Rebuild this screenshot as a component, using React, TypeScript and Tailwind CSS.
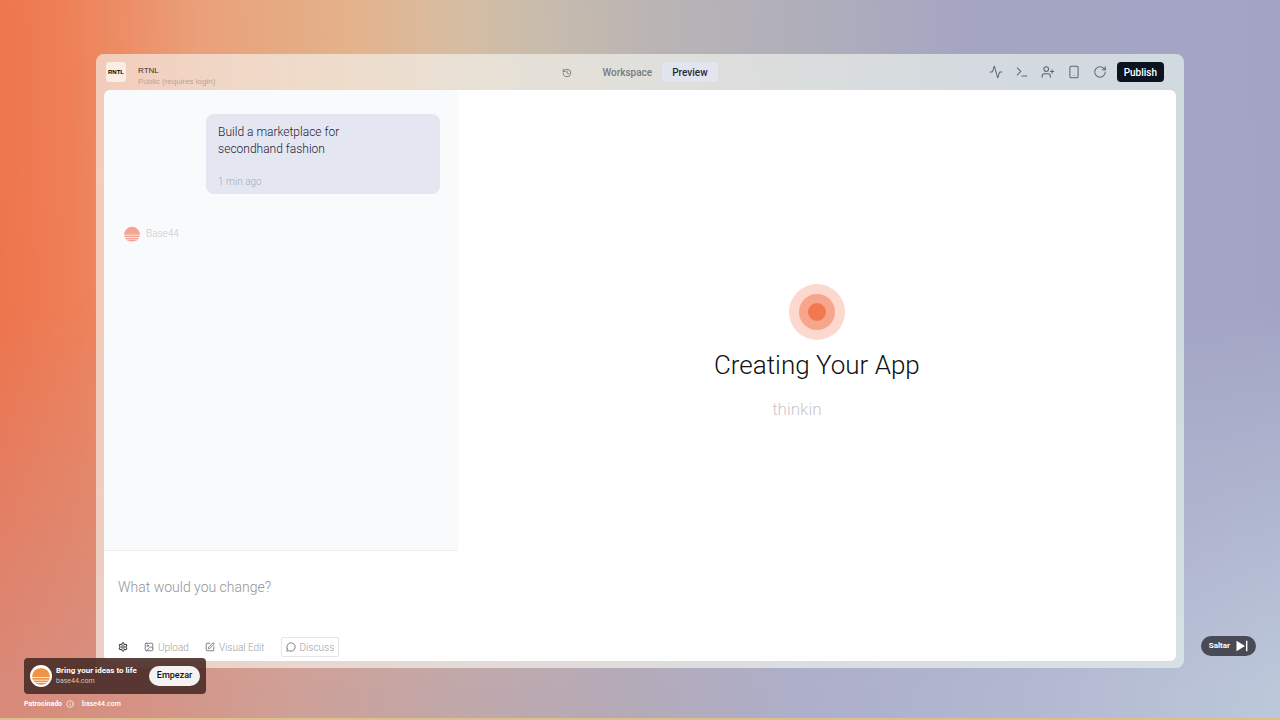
import React, { useState } from 'react';
import {
  Activity,
  History,
  Image as ImageIcon,
  Info,
  MessageCircle,
  RotateCw,
  Settings,
  Smartphone,
  SquarePen,
  Terminal,
  UserPlus,
} from 'lucide-react';
import { clsx } from 'clsx';

const tools = [
  { label: 'Activity', icon: Activity },
  { label: 'Console', icon: Terminal },
  { label: 'Invite', icon: UserPlus },
  { label: 'Device', icon: Smartphone },
  { label: 'Refresh', icon: RotateCw },
];

const tabs = ['Workspace', 'Preview'];

// Sun logo: half disc on top, stripes getting thinner below
const SunLogo = ({ className }: { className?: string }) => (
  <svg viewBox="0 0 20 20" className={className} fill="currentColor" aria-hidden="true">
    <path d="M0 11a10 10 0 1 1 20 0z" />
    <path d="M.2 12h19.6l-.6 2.2H.8z" />
    <path d="M1.3 15h17.4l-1.3 1.8H2.6z" />
    <path d="M3.3 17.5h13.4l-2 1.3H5.3z" />
    <path d="M6.3 19.3h7.4A10 10 0 0 1 6.3 19.3z" />
  </svg>
);

const SkipIcon = () => (
  <svg viewBox="0 0 12 12" className="size-3" fill="currentColor" aria-hidden="true">
    <path d="M.5.8 9 6 .5 11.2z" />
    <path d="M10 .8h1.4v10.4H10z" />
  </svg>
);

const Backdrop = () => (
  <div className="absolute inset-0 -z-10 bg-[linear-gradient(88deg,#ef724a_0%,#ee8058_7%,#eaa079_17%,#e3b38b_29%,#d8bca0_36%,#c9bcab_43%,#bab4b4_52%,#aeaebb_65%,#a5a5c3_76%,#a3a4c5_100%)]">
    <div className="absolute inset-0 bg-[linear-gradient(92deg,#d98878_0%,#d49588_15%,#cfa097_24%,#bfa8ab_38%,#b4aab8_50%,#adafcb_64%,#b3b7d0_80%,#bcc8da_100%)] [mask-image:linear-gradient(180deg,transparent_42%,black_96%)]" />
  </div>
);

const Header = () => {
  const [active, setActive] = useState('Preview');

  return (
    <header className="flex h-9 items-center px-0.5">
      <div className="flex flex-1 items-center gap-3">
        <div className="flex size-5 items-center justify-center rounded-sm bg-[#f9ede4] text-[6px] font-black text-black">
          RNTL
        </div>
        <div className="pt-2">
          <h1 className="text-[8px] leading-3 text-[#3b2c2a]">RTNL</h1>
          <p className="text-[8px] leading-2.5 text-[#b7a49c]">Public (requires login)</p>
        </div>
      </div>

      <div className="ml-2.5 flex items-center gap-5">
        <button type="button" aria-label="History" className="pt-0.5 text-[#6b7073]">
          <History size={10} />
        </button>
        <nav className="flex text-[10px] font-medium [font-family:Roboto,sans-serif]">
          {tabs.map((tab) => (
            <button
              key={tab}
              type="button"
              onClick={() => setActive(tab)}
              className={clsx(
                'h-5 rounded-xs px-2.5',
                active === tab ? 'bg-[#e2e5f0] text-[#252a3c]' : 'text-[#767b7e]'
              )}
            >
              {tab}
            </button>
          ))}
        </nav>
      </div>

      <div className="flex flex-1 items-center justify-end gap-2.5 pr-2.5">
        <div className="flex items-center gap-3">
          {tools.map(({ label, icon: Icon }) => (
            <button key={label} type="button" aria-label={label} className="text-[#5d686c]">
              <Icon size={14} strokeWidth={1.75} />
            </button>
          ))}
        </div>
        <button
          type="button"
          className="h-5 rounded-sm bg-[#0b1220] px-[7px] text-[10px] font-medium text-white [font-family:Roboto,sans-serif]"
        >
          Publish
        </button>
      </div>
    </header>
  );
};

const ChatPanel = () => (
  <section className="flex w-[33%] flex-col bg-[#f9fafc]">
    <div className="flex-1 pt-6 pr-4.5 pl-5">
      <div className="ml-auto w-[74%] rounded-lg bg-[#e4e7f1] px-3 pt-2.5 pb-1">
        <p className="text-xs leading-[17px] text-[#1d2233]">
          Build a marketplace for
          <br />
          secondhand fashion
        </p>
        <p className="mt-4 text-[10px] leading-4 text-[#a4a8b4]">1 min ago</p>
      </div>
      <div className="mt-8 flex items-center gap-1.5 text-[10px] leading-4 text-[#c8cbd0]">
        <SunLogo className="size-4 text-[#f3a495]" />
        Base44
      </div>
    </div>

    <form className="border-t border-[#eceef1] bg-white px-3.5 pb-1" onSubmit={(e) => e.preventDefault()}>
      <input
        type="text"
        aria-label="What would you change?"
        placeholder="What would you change?"
        className="mt-6 h-6 w-full text-sm outline-none placeholder:text-[#949494]"
      />
      <div className="mt-[38px] flex items-center gap-4 text-[10px] text-[#a0a0a0]">
        <button type="button" aria-label="Settings" className="text-[#444]">
          <Settings size={10} strokeWidth={2.5} />
        </button>
        <button type="button" className="flex items-center gap-1">
          <ImageIcon size={10} className="text-[#666]" />
          Upload
        </button>
        <button type="button" className="flex items-center gap-1">
          <SquarePen size={10} className="text-[#666]" />
          Visual Edit
        </button>
        <button type="button" className="flex h-5 items-center gap-1 rounded-xs border border-[#e3e5e9] px-1">
          <MessageCircle size={10} className="text-[#666]" />
          Discuss
        </button>
      </div>
    </form>
  </section>
);

const PreviewPanel = () => (
  <section className="flex flex-1 flex-col items-center justify-center bg-white pb-11">
    <div className="flex size-14 items-center justify-center rounded-full bg-[#fcd8ce]">
      <div className="flex size-9 items-center justify-center rounded-full bg-[#f7a58b]">
        <div className="size-4.5 rounded-full bg-[#f27850]" />
      </div>
    </div>
    <h2 className="mt-1.5 text-[26px] text-[#111]">Creating Your App</h2>
    <p className="mt-3 pr-10 text-[17px] text-[#c9c9c9]">thinkin</p>
  </section>
);

export default function App() {
  return (
    <main className="relative isolate flex h-screen flex-col overflow-hidden border-b-2 border-[#dcc08a] px-24 pt-[54px] pb-[50px] font-['Liberation_Sans',sans-serif]">
      <Backdrop />

      <div className="flex min-h-0 flex-1 flex-col rounded-lg bg-[linear-gradient(90deg,rgba(246,240,234,0.66)_0%,rgba(240,241,236,0.7)_50%,rgba(224,236,233,0.75)_100%)] px-2 pb-[7px]">
        <Header />
        <div className="flex min-h-0 flex-1 overflow-hidden rounded-md font-light [font-family:Roboto,sans-serif]">
          <ChatPanel />
          <PreviewPanel />
        </div>
      </div>

      {/* Ad overlay */}
      <aside className="absolute bottom-2 left-6 text-white [font-family:Roboto,sans-serif]">
        <div className="flex items-center gap-1 rounded-sm bg-[#4a2c28]/90 px-1.5 py-[7px]">
          <div className="flex size-5.5 items-center justify-center rounded-full bg-white">
            <SunLogo className="size-4.5 text-[#ed9448]" />
          </div>
          <div>
            <p className="text-[8px] leading-2.5 font-bold">Bring your ideas to life</p>
            <p className="text-[7px] leading-2.5 text-[#d0c4c2]">base44.com</p>
          </div>
          <button type="button" className="ml-2 h-5 rounded-full bg-[#f5f3f2] px-2 text-[9px] font-medium text-[#111]">
            Empezar
          </button>
        </div>
        <div className="mt-1 flex items-center gap-1 text-[7px] leading-3">
          <span className="font-bold">Patrocinado</span>
          <Info size={8} />
          <a href="#base44" className="ml-1 font-medium">base44.com</a>
        </div>
      </aside>

      <button
        type="button"
        className="absolute right-6 bottom-[62px] flex h-5 items-center gap-1.5 rounded-full bg-[#484b55] px-2 text-[8px] font-bold text-white [font-family:Roboto,sans-serif]"
      >
        Saltar
        <SkipIcon />
      </button>
    </main>
  );
}
